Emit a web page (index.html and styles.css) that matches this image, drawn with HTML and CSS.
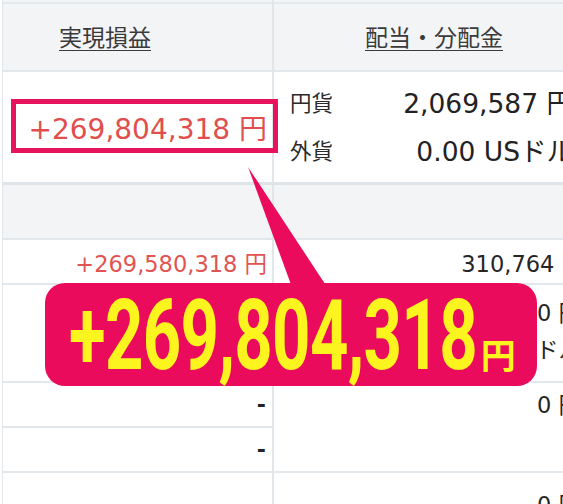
FILE: index.html
```html
<!DOCTYPE html>
<html lang="ja">
<head>
<meta charset="utf-8">
<title>実現損益</title>
<link rel="stylesheet" href="styles.css">
</head>
<body>
<div class="page">
  <div class="grid">
    <div class="cell head head-left"><span class="head-link">実現損益</span></div>
    <div class="cell head head-right"><span class="head-link">配当・分配金</span></div>

    <div class="cell left big-row"><span class="profit big">+269,804,318 円</span></div>
    <div class="cell right big-row">
      <div class="pair"><span class="label">円貨</span><span class="val">2,069,587 円</span></div>
      <div class="pair"><span class="label">外貨</span><span class="val">0.00 USドル</span></div>
    </div>

    <div class="cell left band"></div>
    <div class="cell right band"></div>

    <div class="cell left row"><span class="profit">+269,580,318 円</span></div>
    <div class="cell right row r3"><span class="num">310,764 円</span></div>

    <div class="cell left row"></div>
    <div class="cell right lines r4">
      <span class="num">0 円</span>
      <span class="num">0.00 USドル</span>
    </div>

    <div class="cell left row"><span class="dash">-</span></div>
    <div class="cell right lines r56">
      <span class="num">0 円</span>
    </div>

    <div class="cell left row"><span class="dash">-</span></div>

    <div class="cell left row last"></div>
    <div class="cell right lines r7 last">
      <span class="num">0 円</span>
    </div>
  </div>

  <div class="mark-box"></div>
  <svg class="tail" viewBox="0 0 100 130" width="100" height="130">
    <polygon points="8,7 53,130 89,130" fill="#ea0b5c"/>
  </svg>
  <div class="callout">
    <span class="callout-num">+269,804,318</span><span class="callout-yen">円</span>
  </div>
</div>
</body>
</html>
```

FILE: styles.css
```css
* { box-sizing: border-box; }

html, body {
  margin: 0;
  padding: 0;
  background: #ffffff;
}

body {
  width: 563px;
  height: 504px;
  overflow: hidden;
  font-family: "DejaVu Sans", "Noto Sans CJK JP", sans-serif;
  color: #262626;
}

.page {
  position: relative;
  width: 563px;
  height: 504px;
  overflow: hidden;
}

.grid {
  display: grid;
  grid-template-columns: 271px 330px;
  grid-template-rows: 72px 113px 55px 45px 98px 45px 45px 70px;
  margin-left: 2px;
  border-left: 1px solid #e3e7ec;
}

.cell {
  border-bottom: 2px solid #e2e7ec;
  display: flex;
  align-items: center;
}

.left {
  grid-column: 1;
  border-right: 2px solid #e1e6eb;
  justify-content: flex-end;
  padding-right: 5px;
}

.right {
  grid-column: 2;
  justify-content: flex-end;
  padding-right: 23px;
}

.head {
  background: #f3f4f6;
  box-shadow: inset 0 2px 0 #f3f4f6, inset 0 4px 0 #e4e9ee;
  font-family: "Noto Sans CJK JP", sans-serif;
  font-size: 23px;
  color: #3a3a3a;
  padding-top: 2px;
}

.head-left {
  grid-column: 1;
  border-right: 2px solid #e1e6eb;
  padding-left: 56px;
}

.head-right {
  grid-column: 2;
  padding-left: 91px;
}

.head-link {
  text-decoration: underline;
  text-underline-offset: 4px;
  text-decoration-thickness: 1px;
}

.big-row {
  border-bottom: 3px solid #dfe4e9;
}

.profit {
  color: #e05552;
  font-size: 22.5px;
  white-space: nowrap;
}

.profit.big {
  font-size: 28px;
  color: #e04f4d;
}

.right.big-row {
  flex-direction: column;
  align-items: stretch;
  justify-content: flex-start;
  padding: 5px 31px 0 16px;
}

.pair {
  display: flex;
  justify-content: space-between;
  align-items: center;
  height: 48px;
  white-space: nowrap;
}

.label {
  font-family: "Noto Sans CJK JP", sans-serif;
  font-size: 21.5px;
  color: #2a2a2a;
}

.val {
  font-size: 26.5px;
  color: #222;
}

.band {
  background: #f3f4f5;
}

.num {
  font-size: 22.5px;
  color: #262626;
  white-space: nowrap;
}

.r3 { padding-right: 20px; }

.lines {
  flex-direction: column;
  align-items: flex-end;
  justify-content: flex-start;
}

.lines .num {
  line-height: 37px;
}

.r4 { padding-top: 10px; }
.r56 { grid-row: 6 / span 2; padding-top: 4px; }
.r7 { padding-top: 14px; }

.last { border-bottom: none; }

.dash {
  font-size: 22px;
  font-weight: bold;
  color: #222;
  padding-right: 1px;
}

/* Annotations laid over the table */
.mark-box {
  position: absolute;
  left: 11px;
  top: 99px;
  width: 267px;
  height: 54px;
  border: 5px solid #e8135d;
}

.tail {
  position: absolute;
  left: 240px;
  top: 160px;
}

.callout {
  position: absolute;
  left: 45px;
  top: 283px;
  width: 492px;
  height: 103px;
  border-radius: 20px;
  background: #ea0b5c;
  display: flex;
  align-items: baseline;
  padding: 4px 0 0 24px;
  color: #fbf41e;
  white-space: nowrap;
}

.callout-num {
  display: inline-block;
  font-family: Roboto, "Liberation Sans", sans-serif;
  font-weight: 700;
  font-size: 98px;
  line-height: 98px;
  transform: scaleX(0.685);
  transform-origin: left center;
  margin-right: -184px;
  letter-spacing: -1px;
}

.callout-yen {
  font-family: "Noto Sans CJK JP", sans-serif;
  font-weight: 700;
  font-size: 35px;
  line-height: 35px;
}
```
